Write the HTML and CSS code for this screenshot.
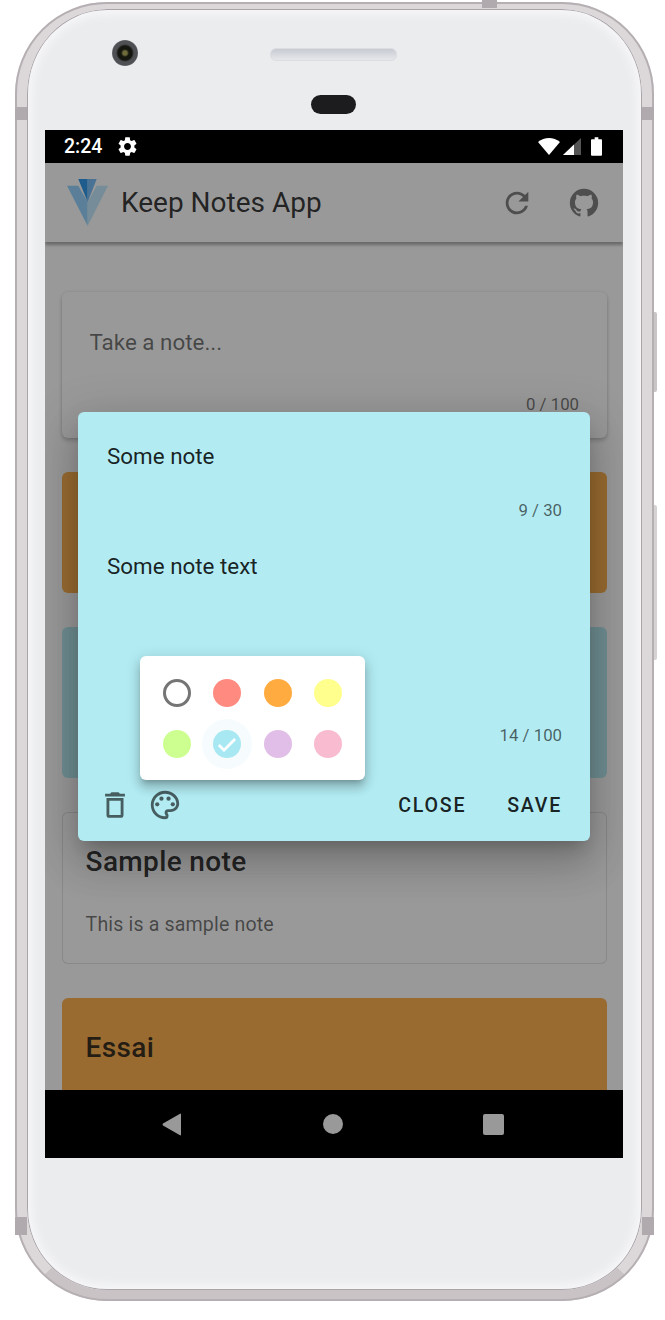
FILE: index.html
```html
<!DOCTYPE html>
<html lang="en">
<head>
  <meta charset="UTF-8">
  <meta name="viewport" content="width=device-width, initial-scale=1.0">
  <title>Keep Notes App</title>
  <link rel="stylesheet" href="styles.css">
</head>
<body>
  <div class="phone">
    <span class="band band-left"></span>
    <span class="band band-right"></span>
    <span class="band band-left-low"></span>
    <span class="band band-right-low"></span>
    <span class="band band-top"></span>
    <span class="side-btn side-btn-power"></span>
    <span class="side-btn side-btn-volume"></span>

    <div class="bezel-top">
      <div class="bezel-row">
        <div class="camera"></div>
        <div class="speaker"></div>
      </div>
      <div class="sensor"></div>
    </div>

    <div class="screen">
      <div class="status-bar">
        <span class="status-time">2:24</span>
        <svg class="status-gear" viewBox="0 0 24 24"><path d="M19.14 12.94c.04-.3.06-.61.06-.94 0-.32-.02-.64-.07-.94l2.03-1.58c.18-.14.23-.41.12-.61l-1.92-3.32c-.12-.22-.37-.29-.59-.22l-2.39.96c-.5-.38-1.03-.7-1.62-.94l-.36-2.54c-.04-.24-.24-.41-.48-.41h-3.84c-.24 0-.43.17-.47.41l-.36 2.54c-.59.24-1.13.57-1.62.94l-2.39-.96c-.22-.08-.47 0-.59.22L2.74 8.87c-.12.21-.08.47.12.61l2.03 1.58c-.05.3-.09.63-.09.94s.02.64.07.94l-2.03 1.58c-.18.14-.23.41-.12.61l1.92 3.32c.12.22.37.29.59.22l2.39-.96c.5.38 1.03.7 1.62.94l.36 2.54c.05.24.24.41.48.41h3.84c.24 0 .44-.17.47-.41l.36-2.54c.59-.24 1.13-.56 1.62-.94l2.39.96c.22.08.47 0 .59-.22l1.92-3.32c.12-.22.07-.47-.12-.61l-2.01-1.58zM12 15.6c-1.98 0-3.6-1.62-3.6-3.6s1.62-3.6 3.6-3.6 3.6 1.62 3.6 3.6-1.62 3.6-3.6 3.6z"/></svg>
        <div class="status-right">
          <svg class="status-wifi" viewBox="0 0 22 17"><path d="M11 17L0 4Q5 0 11 0T22 4Z"/></svg>
          <svg class="status-signal" viewBox="0 0 18 17"><path d="M0 17L18 0V17Z" fill="#555"/><path d="M0 17L11 6.6V17Z" fill="#fff"/></svg>
          <svg class="status-battery" viewBox="0 0 12 20"><path d="M4 0H8V2H11Q12 2 12 3V19Q12 20 11 20H1Q0 20 0 19V3Q0 2 1 2H4Z"/></svg>
        </div>
      </div>

      <div class="viewport">
        <header class="app-bar">
          <svg class="logo" viewBox="0 0 41 47">
            <path d="M0 6.700H11.300L20.700 23V47Z" fill="#8cd0ff"/>
            <path d="M41 6.700H29.700L20.700 23V47Z" fill="#bfe8ff"/>
            <path d="M11.300 0H20.700V23Z" fill="#1a8fe8"/>
            <path d="M29.700 0H20.700V23Z" fill="#6cb8f5"/>
          </svg>
          <span class="app-title">Keep Notes App</span>
          <svg class="bar-icon bar-icon-refresh" viewBox="0 0 24 24"><path d="M17.65 6.35C16.2 4.9 14.21 4 12 4c-4.42 0-7.99 3.58-7.99 8s3.57 8 7.99 8c3.73 0 6.84-2.55 7.73-6h-2.08c-.82 2.33-3.04 4-5.65 4-3.31 0-6-2.69-6-6s2.69-6 6-6c1.66 0 3.14.69 4.22 1.78L13 11h7V4l-2.35 2.35z"/></svg>
          <svg class="bar-icon" viewBox="0 0 24 24"><path d="M12,2A10,10 0 0,0 2,12C2,16.42 4.87,20.17 8.84,21.5C9.34,21.58 9.5,21.27 9.5,21C9.5,20.77 9.5,20.14 9.5,19.31C6.73,19.91 6.14,17.97 6.14,17.97C5.68,16.81 5.03,16.5 5.03,16.5C4.12,15.88 5.1,15.9 5.1,15.9C6.1,15.97 6.63,16.93 6.63,16.93C7.5,18.45 8.97,18 9.54,17.76C9.63,17.11 9.89,16.67 10.17,16.42C7.95,16.17 5.62,15.31 5.62,11.5C5.62,10.39 6,9.5 6.65,8.79C6.55,8.54 6.2,7.5 6.75,6.15C6.75,6.15 7.59,5.88 9.5,7.17C10.29,6.95 11.15,6.84 12,6.84C12.85,6.84 13.71,6.95 14.5,7.17C16.41,5.88 17.25,6.15 17.25,6.15C17.8,7.5 17.45,8.54 17.35,8.79C18,9.5 18.38,10.39 18.38,11.5C18.38,15.32 16.04,16.16 13.81,16.41C14.17,16.72 14.5,17.33 14.5,18.26C14.5,19.6 14.5,20.68 14.5,21C14.5,21.27 14.66,21.59 15.17,21.5C19.14,20.16 22,16.42 22,12A10,10 0 0,0 12,2Z"/></svg>
        </header>

        <main class="notes">
          <div class="card new-note">
            <div class="new-note-text">Take a note...</div>
            <div class="counter">0 / 100</div>
          </div>
          <div class="card card-orange card-short"></div>
          <div class="card card-teal card-tall"></div>
          <div class="card card-outlined">
            <div class="note-title">Sample note</div>
            <div class="note-text">This is a sample note</div>
          </div>
          <div class="card card-orange card-last">
            <div class="note-title">Essai</div>
          </div>
        </main>

        <div class="overlay"></div>

        <div class="dialog">
          <div class="field-title">Some note</div>
          <div class="counter counter-title">9 / 30</div>
          <div class="field-text">Some note text</div>
          <div class="counter counter-text">14 / 100</div>
          <div class="dialog-actions">
            <svg class="action-icon action-trash" viewBox="0 0 24 24"><path d="M6,19A2,2 0 0,0 8,21H16A2,2 0 0,0 18,19V7H6V19M8,9H16V19H8V9M15.5,4L14.5,3H9.5L8.5,4H5V6H19V4H15.5Z"/></svg>
            <svg class="action-icon" viewBox="0 0 24 24"><path d="M12 22C6.49 22 2 17.51 2 12S6.49 2 12 2s10 4.04 10 9c0 3.31-2.69 6-6 6h-1.77c-.28 0-.5.22-.5.5 0 .12.05.23.13.33.41.47.64 1.06.64 1.67A2.5 2.5 0 0 1 12 22zm0-18c-4.41 0-8 3.59-8 8s3.59 8 8 8c.28 0 .5-.22.5-.5a.54.54 0 0 0-.14-.35c-.41-.46-.63-1.05-.63-1.65a2.5 2.5 0 0 1 2.5-2.5H16c2.21 0 4-1.79 4-4 0-3.86-3.59-7-8-7z"/><circle cx="6.5" cy="11.5" r="1.5"/><circle cx="9.5" cy="7.5" r="1.5"/><circle cx="14.5" cy="7.5" r="1.5"/><circle cx="17.5" cy="11.5" r="1.5"/></svg>
            <span class="action-btn action-close">CLOSE</span>
            <span class="action-btn">SAVE</span>
          </div>

          <div class="palette">
            <span class="swatch swatch-white"></span>
            <span class="swatch swatch-red"></span>
            <span class="swatch swatch-orange"></span>
            <span class="swatch swatch-yellow"></span>
            <span class="swatch swatch-green"></span>
            <span class="swatch swatch-cyan">
              <svg class="swatch-check" viewBox="0 0 24 24"><path d="M9 16.2L4.8 12l-1.9 1.9L9 20 21 8l-1.9-1.9z"/></svg>
            </span>
            <span class="swatch swatch-purple"></span>
            <span class="swatch swatch-pink"></span>
          </div>
        </div>
      </div>

      <div class="nav-bar">
        <svg class="nav-back" viewBox="0 0 20 23"><path d="M19 1.500V21.500Q19 23 17.600 22L1 12.500Q0 11.500 1 10.500L17.600 1Q19 0 19 1.500Z"/></svg>
        <span class="nav-home"></span>
        <span class="nav-recent"></span>
      </div>
    </div>
  </div>
</body>
</html>
```

FILE: styles.css
```css
html, body {
  margin: 0;
  padding: 0;
  background: #fff;
}
body {
  width: 665px;
  height: 1320px;
  overflow: hidden;
  font-family: Roboto, "Liberation Sans", sans-serif;
}

/* device frame */
.phone {
  position: relative;
  box-sizing: border-box;
  width: 639px;
  height: 1299px;
  margin: 2px 0 0 15px;
  padding: 0 19px 0 18px;
  background: #ebecee;
  border-style: solid;
  border-width: 7px 12px 11px;
  border-color: #dcd8da #dcd8da #c9c3c6;
  border-radius: 92px;
  box-shadow: inset 0 0 0 1px #aaa4a8, inset 0 0 10px 5px #f7f7f9;
}
/* thin darker rim on the outside of the metal edge */
.phone::after {
  content: "";
  position: absolute;
  inset: -7px -12px -11px;
  border: 2px solid #b5afb3;
  border-radius: 92px;
  pointer-events: none;
}
.band {
  position: absolute;
  z-index: 1;
  background: #b0aaae;
}
.band-left,
.band-right {
  top: 98px;
  width: 12px;
  height: 13px;
}
.band-left-low,
.band-right-low {
  top: 1208px;
  width: 12px;
  height: 18px;
}
.band-left,
.band-left-low {
  left: -12px;
}
.band-right,
.band-right-low {
  right: -12px;
}
.band-top {
  top: -9px;
  left: 455px;
  width: 15px;
  height: 8px;
}
.side-btn {
  position: absolute;
  right: -15px;
  width: 3px;
  border-radius: 0 2px 2px 0;
  background: #d6d2d3;
}
.side-btn-power {
  top: 303px;
  height: 80px;
  background: #c9c5c7;
}
.side-btn-volume {
  top: 496px;
  height: 155px;
}

.bezel-top {
  height: 121px;
}
.bezel-row {
  display: flex;
  align-items: center;
  padding: 31px 0 0 67px;
}
.camera {
  width: 26px;
  height: 26px;
  border-radius: 50%;
  background: radial-gradient(circle, #6f6c3c 0 2px, #15160f 4px 7px, #4e5054 9px 12px, #6a6c70 13px);
}
.speaker {
  box-sizing: border-box;
  width: 127px;
  height: 13px;
  margin: 3px 0 0 132px;
  border: 1px solid #dcdde1;
  border-radius: 6px;
  background: linear-gradient(#c8cbd3, #e6e7ea);
}
.sensor {
  width: 45px;
  height: 19px;
  margin: 29px 0 0 266px;
  border-radius: 10px;
  background: #1c1c1f;
}

.screen {
  width: 578px;
  height: 1028px;
  display: flex;
  flex-direction: column;
}

/* status bar */
.status-bar {
  height: 33px;
  display: flex;
  align-items: center;
  padding: 0 21px 0 19px;
  background: #000;
  color: #fff;
}
.status-time {
  font-size: 19.5px;
  font-weight: 500;
}
.status-gear {
  width: 23px;
  height: 23px;
  margin-left: 14px;
  fill: #fff;
}
.status-right {
  margin-left: auto;
  display: flex;
  align-items: center;
}
.status-wifi {
  width: 22px;
  height: 17px;
  fill: #fff;
}
.status-signal {
  width: 18px;
  height: 17px;
  margin-left: 3px;
}
.status-battery {
  width: 11px;
  height: 19px;
  margin-left: 10px;
  fill: #fff;
}

/* app underneath the dialog */
.viewport {
  flex: 1;
  position: relative;
  overflow: hidden;
  background: #fff;
}
.app-bar {
  height: 79px;
  display: flex;
  align-items: center;
  padding: 0 22px 0 22px;
  background: #fff;
  box-shadow: 0 3px 3px rgba(0, 0, 0, 0.35);
}
.logo {
  width: 41px;
  height: 47px;
  margin-right: 1px;
}
.app-title {
  margin-left: 12px;
  font-size: 28px;
  color: rgba(0, 0, 0, 0.87);
}
.bar-icon {
  width: 34px;
  height: 34px;
  fill: rgba(0, 0, 0, 0.54);
}
.bar-icon-refresh {
  margin-left: auto;
  margin-right: 33px;
}

.notes {
  display: flex;
  flex-direction: column;
  gap: 34px;
  padding: 50px 16px 0 17px;
}
.card {
  box-sizing: border-box;
  border-radius: 6px;
  flex: none;
}
.new-note {
  height: 146px;
  padding: 37px 28px 0 27.5px;
  background: #fff;
  box-shadow: 0 3px 4px rgba(0, 0, 0, 0.2), 0 0 3px rgba(0, 0, 0, 0.12);
}
.new-note-text {
  font-size: 22.4px;
  color: rgba(0, 0, 0, 0.6);
}
.new-note .counter {
  margin-top: 39px;
}
.counter {
  font-size: 16.8px;
  text-align: right;
  color: rgba(0, 0, 0, 0.6);
}
.card-orange {
  background: #ffab40;
}
.card-teal {
  background: #b2ebf2;
}
.card-short {
  height: 121px;
}
.card-tall {
  height: 151px;
}
.card-outlined {
  height: 152px;
  padding: 32px 24px 0 22.6px;
  border: 1.4px solid rgba(0, 0, 0, 0.12);
  background: #fff;
}
.card-last {
  height: 120px;
  padding: 33px 24px 0 23.5px;
}
.note-title {
  font-size: 28px;
  font-weight: 500;
  letter-spacing: 0.35px;
  color: rgba(0, 0, 0, 0.87);
}
.note-text {
  margin-top: 35px;
  font-size: 19.6px;
  letter-spacing: 0.14px;
  color: rgba(0, 0, 0, 0.6);
}

.overlay {
  position: absolute;
  inset: 0;
  background: #212121;
  opacity: 0.46;
}

/* edit dialog */
.dialog {
  position: absolute;
  top: 249px;
  left: 33px;
  box-sizing: border-box;
  width: 512px;
  height: 429px;
  padding: 30px 28px 0 29px;
  border-radius: 6px;
  background: #b2ebf2;
  box-shadow: 0 11px 15px -7px rgba(0, 0, 0, 0.2), 0 24px 38px 3px rgba(0, 0, 0, 0.14), 0 9px 46px 8px rgba(0, 0, 0, 0.12);
  color: rgba(0, 0, 0, 0.87);
}
.field-title,
.field-text {
  font-size: 22.4px;
  line-height: 28px;
}
.counter-title {
  margin-top: 30px;
}
.field-text {
  margin-top: 32px;
}
.counter-text {
  margin-top: 145px;
}
.dialog-actions {
  display: flex;
  align-items: center;
  margin: 43px 0 0 -9px;
}
.action-icon {
  width: 34px;
  height: 34px;
  fill: rgba(0, 0, 0, 0.6);
}
.action-trash {
  margin-right: 16px;
}
.action-btn {
  font-size: 19.6px;
  font-weight: 500;
  letter-spacing: 1.75px;
}
.action-close {
  margin-left: auto;
  margin-right: 41px;
}

/* colour picker */
.palette {
  position: absolute;
  top: 244px;
  left: 62px;
  box-sizing: border-box;
  width: 225px;
  height: 124px;
  padding: 12px 10px 12px 11.5px;
  display: grid;
  grid-template-columns: repeat(4, 50.5px);
  grid-auto-rows: 50.5px;
  border-radius: 6px;
  background: #fff;
  box-shadow: 0 5px 5px -3px rgba(0, 0, 0, 0.2), 0 8px 10px 1px rgba(0, 0, 0, 0.14), 0 3px 14px 2px rgba(0, 0, 0, 0.12);
}
.swatch {
  justify-self: center;
  align-self: center;
  display: flex;
  align-items: center;
  justify-content: center;
  width: 28px;
  height: 28px;
  border-radius: 50%;
  box-sizing: border-box;
}
.swatch-white {
  border: 3px solid #757575;
  background: #fff;
}
.swatch-red { background: #ff8a80; }
.swatch-orange { background: #ffab40; }
.swatch-yellow { background: #ffff8d; }
.swatch-green { background: #ccff90; }
.swatch-cyan {
  background: #a8e8f3;
  box-shadow: 0 0 0 11px #f6fcfd;
}
.swatch-purple { background: #e1bee7; }
.swatch-pink { background: #f8bbd0; }
.swatch-check {
  width: 24px;
  height: 24px;
  fill: #fff;
}

/* navigation bar */
.nav-bar {
  height: 68px;
  display: flex;
  align-items: center;
  padding: 0 119px 0 117px;
  justify-content: space-between;
  background: #000;
}
.nav-back {
  width: 20px;
  height: 23px;
  fill: #999;
}
.nav-home {
  width: 20px;
  height: 20px;
  border-radius: 50%;
  background: #999;
}
.nav-recent {
  width: 21px;
  height: 21px;
  border-radius: 2px;
  background: #999;
}
```
